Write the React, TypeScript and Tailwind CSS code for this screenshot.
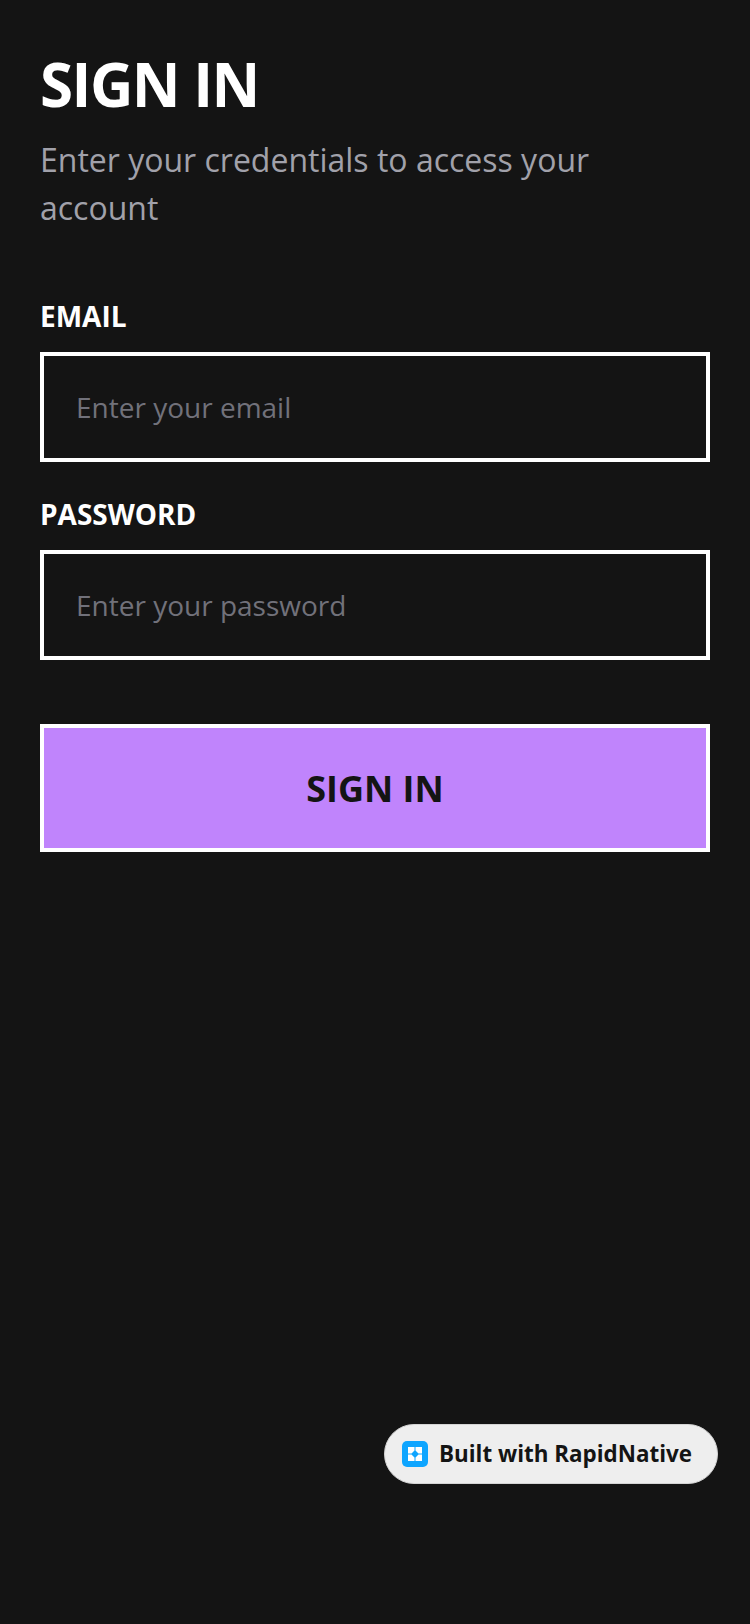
const font = { fontFamily: '"Open Sans", sans-serif' };

function Field({ label, placeholder, type }: { label: string; placeholder: string; type: string }) {
  return (
    <div className="flex flex-col">
      <label className="text-[28px] leading-[36px] font-bold text-white">{label}</label>
      <input
        type={type}
        placeholder={placeholder}
        className="mt-[18px] h-[110px] w-full border-4 border-white bg-transparent px-8 text-[28px] text-white outline-none placeholder:text-[#71717a]"
      />
    </div>
  );
}

function RapidLogo() {
  return (
    <svg width="26" height="26" viewBox="0 0 26 26" className="shrink-0">
      <rect width="26" height="26" rx="5" fill="#0ea5ff" />
      <path d="M6 6h6.500v3.500L9.500 12.500H6zM13.500 6H20v6.500h-3.500L13.500 9.500zM6 13.500h3.500l3 3V20H6zM20 13.500V20h-6.500v-3.500l3-3z" fill="#fff" />
    </svg>
  );
}

export default function App() {
  return (
    <div style={font} className="relative min-h-[1624px] w-full bg-[#141414] px-10 pt-[48px]">
      <h1 className="text-[60px] leading-[72px] font-bold tracking-[-1.5px] text-white">SIGN IN</h1>
      <p className="mt-[16px] text-[32px] leading-[48px] text-[#a1a1aa]">Enter your credentials to access your account</p>

      <div className="mt-[66px] flex flex-col gap-[34px]">
        <Field label="EMAIL" placeholder="Enter your email" type="email" />
        <Field label="PASSWORD" placeholder="Enter your password" type="password" />
      </div>

      <button className="mt-[64px] h-[128px] w-full border-4 border-white bg-[#c084fc] pt-[2px] text-[36px] font-bold text-[#141414]">
        SIGN IN
      </button>

      <div className="absolute top-[1424px] left-[384px] flex h-[60px] w-[334px] items-center gap-[11px] rounded-full border border-[#d4d4d4] bg-[#eeeeee] pl-[17px]">
        <RapidLogo />
        <span className="text-[22.4px] font-bold text-[#141414]">Built with RapidNative</span>
      </div>
    </div>
  );
}
